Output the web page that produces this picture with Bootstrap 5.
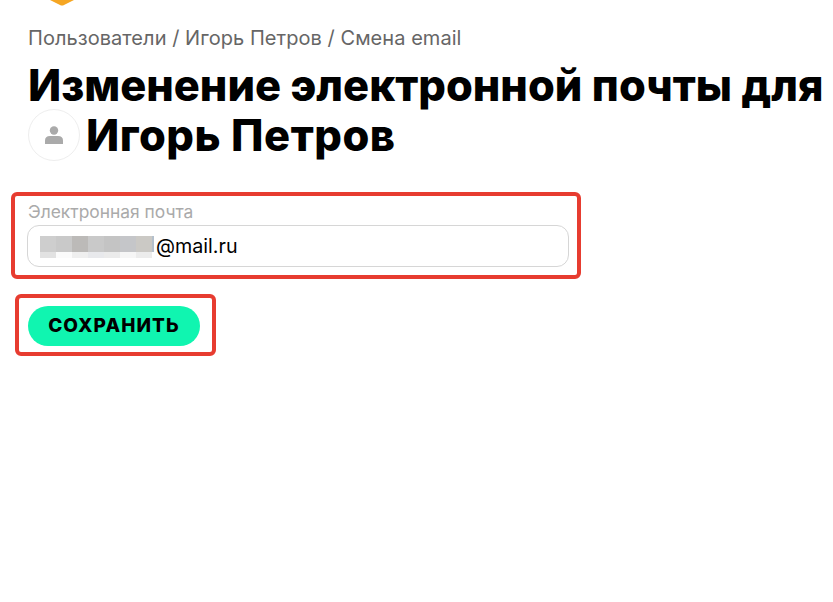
<!DOCTYPE html>
<html lang="ru">
<head>
    <meta charset="UTF-8">
    <meta name="viewport" content="width=device-width, initial-scale=1.0">
    <title>Смена email</title>
    <link href="https://cdn.jsdelivr.net/npm/bootstrap@5.3.0/dist/css/bootstrap.min.css" rel="stylesheet">
    <style>
        body {
            background-color: #fff;
            font-family: "Inter", "Liberation Sans", sans-serif;
            overflow: hidden;
        }

        .page-wrap {
            padding-left: 28px;
            height: 602px;
        }

        .logo-tip {
            display: block;
            margin-left: 22px;
            height: 26px;
        }

        .crumbs {
            font-size: 20px;
            line-height: 24px;
            letter-spacing: .05px;
            color: #666;
        }

        .page-title {
            font-size: 43.4px;
            line-height: 50px;
            font-weight: 800;
            color: #000;
            margin: 10px 0 0;
            white-space: nowrap;
        }

        .user-name {
            letter-spacing: .5px;
        }

        .avatar-ring {
            width: 52px;
            height: 52px;
            margin: -1px 6px -1px 0;
            border: 1px solid #eee;
            border-radius: 50%;
            vertical-align: top;
            display: inline-flex;
        }

        .mark-box {
            border: 4px solid #e73c30;
            border-radius: 6px;
        }

        .email-box {
            width: 570px;
            margin: 32px 0 0 -17px;
            padding: 6px 8px 8px 12px;
        }

        .field-label {
            font-size: 17.4px;
            line-height: 19px;
            color: #aaa;
            margin-bottom: 4px;
            padding-left: 1px;
        }

        .email-field {
            height: 42px;
            border: 1px solid #d6d6d6;
            border-radius: 12px;
            padding-left: 12px;
            padding-top: 1px;
            font-size: 19.7px;
            color: #000;
        }

        .blur-cells {
            display: grid;
            grid-template-columns: repeat(7, 16px) 2px;
            grid-template-rows: 16px 6px;
            width: 114px;
            margin-right: 2px;
            overflow: hidden;
        }

        .save-box {
            width: 201px;
            margin: 15px 0 0 -13px;
            padding: 8px 12px 6px 9px;
        }

        .save-btn {
            width: 172px;
            height: 40px;
            border-radius: 20px;
            background-color: #10f5b0;
            border: 0;
            color: #000;
            font-size: 19px;
            font-weight: 800;
            letter-spacing: 1.1px;
            padding: 0;
        }

        .save-btn:hover {
            background-color: #10f5b0;
            color: #000;
        }
    </style>
</head>
<body>
    <div class="page-wrap">
        <svg class="logo-tip" width="24" height="26" viewBox="0 0 24 26"><path d="M0 0H24L14 5Q12 6 10 5Z" fill="#f5a623"/></svg>
        <div class="crumbs">Пользователи / Игорь Петров / Смена email</div>
        <h1 class="page-title">Изменение электронной почты для<br>
            <span class="avatar-ring align-items-center justify-content-center">
                <svg width="20" height="20" viewBox="0 0 20 20"><circle cx="10" cy="5.500" r="4.200" fill="#aaa"/><path d="M1 19V15.500Q1 11 6 11H14Q19 11 19 15.500V19Z" fill="#aaa"/></svg>
            </span><span class="user-name">Игорь Петров</span></h1>

        <div class="mark-box email-box">
            <div class="field-label">Электронная почта</div>
            <div class="email-field d-flex align-items-center">
                <div class="blur-cells" id="blurCells"></div>
                <span>@mail.ru</span>
            </div>
        </div>

        <div class="mark-box save-box">
            <button class="btn save-btn" type="button">СОХРАНИТЬ</button>
        </div>
    </div>

<script>
    const cells = ["#cecece","#c9c9c9","#bcbab8","#c9c9c9","#c4c4c4","#c5c6c9","#cbc9c5","#b4c0cc",
                   "#e2e2e2","#fbfbfb","#efefef","#e8e9ec","#ebebeb","#f6f6f6","#ececec","#fff"];
    const blur = document.getElementById("blurCells");
    cells.forEach(function(c) {
        const d = document.createElement("div");
        d.style.backgroundColor = c;
        blur.appendChild(d);
    });
</script>
<script src="https://cdn.jsdelivr.net/npm/bootstrap@5.3.0/dist/js/bootstrap.bundle.min.js"></script>
</body>
</html>
